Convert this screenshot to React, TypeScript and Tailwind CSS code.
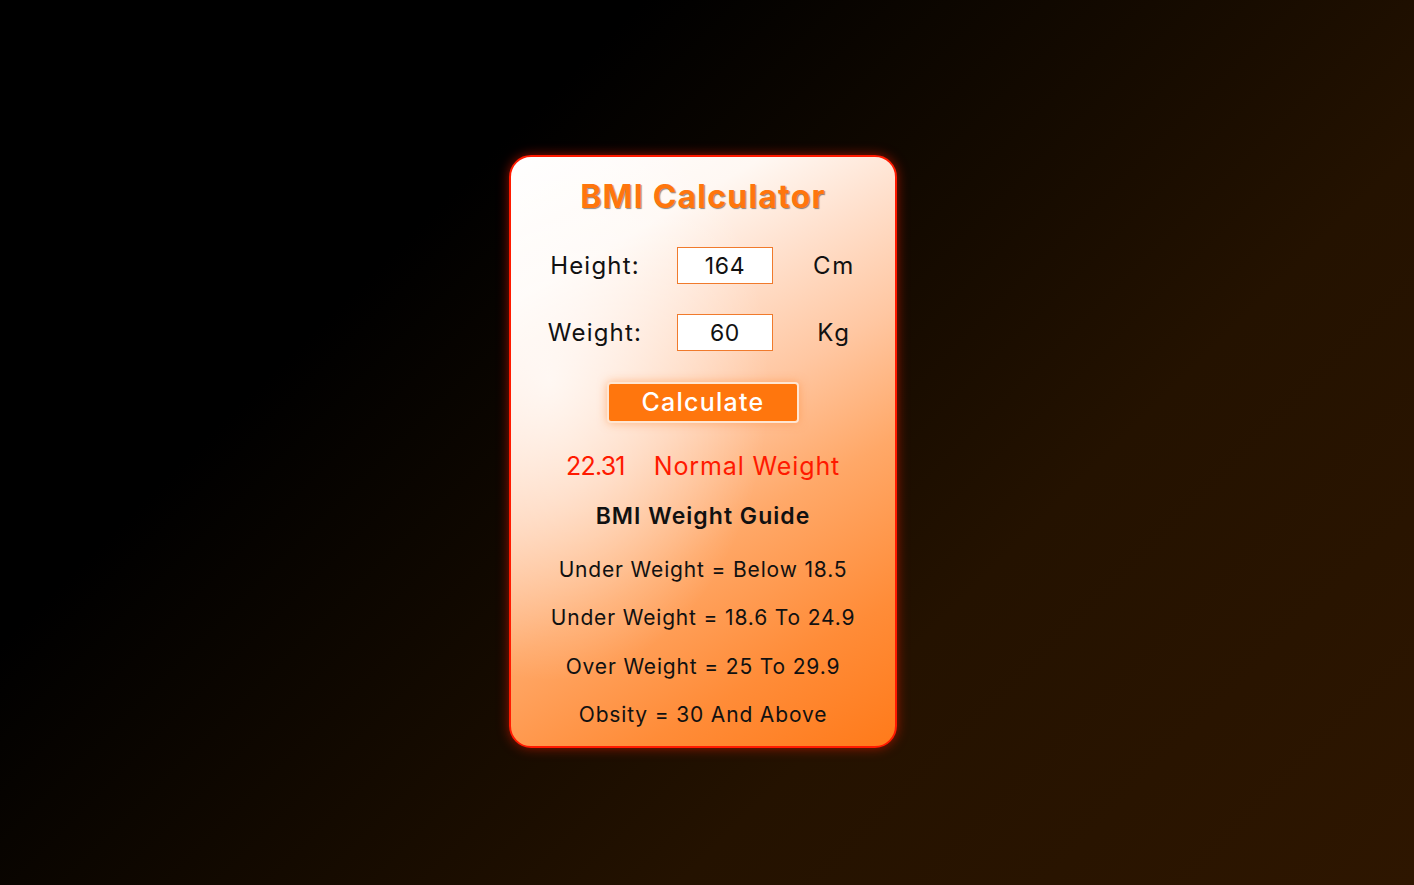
import { useState } from 'react';

const guide = [
  'Under Weight = Below 18.5',
  'Under Weight = 18.6 To 24.9',
  'Over Weight = 25 To 29.9',
  'Obsity = 30 And Above',
];

function Field({ label, value, unit, onChange }: { label: string; value: string; unit: string; onChange: (v: string) => void }) {
  return (
    <div className="flex h-[37px] w-full items-center pl-[32px]">
      <span className="w-[104px] text-center text-[24px] tracking-[0.05em] text-[#111]">{label}</span>
      <input
        value={value}
        onChange={(e) => onChange(e.target.value)}
        className="ml-[30px] h-[37px] w-[96px] border border-[#f07a2c] bg-white text-center text-[23px] tracking-[0.03em] text-[#111] outline-none"
      />
      <span className="ml-[16px] w-[90px] text-center text-[24px] tracking-[0.07em] text-[#111]">{unit}</span>
    </div>
  );
}

export default function App() {
  const [height, setHeight] = useState('164');
  const [weight, setWeight] = useState('60');

  return (
    <div className="flex min-h-screen items-center justify-center bg-[linear-gradient(135deg,#000_28%,#241200_68%,#2e1600_100%)] pr-[8px] pt-[18px] font-['Inter',sans-serif]">
      <div className="flex h-[593px] w-[388px] flex-col items-center rounded-[22px] border-2 border-[#ff1a00] bg-[radial-gradient(ellipse_220px_300px_at_10%_38%,rgba(255,255,255,0.75),rgba(255,255,255,0)),linear-gradient(150deg,#ffffff_0%,#fff8f3_18%,#ffe2d0_30%,#ffc7a2_46%,#ffa868_62%,#ff8c38_82%,#ff7a1a_100%)] pt-[20px] shadow-[0_0_12px_rgba(255,30,0,0.55)]">
        <h1 className="h-[40px] text-[32px] leading-[40px] font-bold tracking-[0.038em] text-[#ff760d] [text-shadow:1px_1px_1px_rgba(0,0,0,0.45)]">
          BMI Calculator
        </h1>

        <div className="mt-[30px] w-full">
          <Field label="Height:" value={height} unit="Cm" onChange={setHeight} />
        </div>
        <div className="mt-[30px] w-full">
          <Field label="Weight:" value={weight} unit="Kg" onChange={setWeight} />
        </div>

        <button className="mt-[31px] h-[41px] w-[192px] rounded-[4px] border-2 border-[#ffe6d2] bg-[#ff760d] text-[25px] font-medium tracking-[0.05em] text-white shadow-[0_0_10px_rgba(255,140,60,0.55)]">
          Calculate
        </button>

        <div className="mt-[27px] flex h-[32px] items-center gap-[29px] text-[25px] leading-[32px] text-[#ff1a00]">
          <span className="tracking-[-0.03em]">22.31</span>
          <span className="tracking-[0.035em]">Normal Weight</span>
        </div>

        <h2 className="mt-[19px] h-[30px] text-[23px] leading-[30px] font-semibold tracking-[0.045em] text-[#111]">BMI Weight Guide</h2>

        <div className="mt-[25px] flex flex-col items-center gap-[20.3px]">
          {guide.map((g) => (
            <p key={g} className="h-[28px] text-[21px] leading-[28px] tracking-[0.04em] text-[#111]">
              {g}
            </p>
          ))}
        </div>
      </div>
    </div>
  );
}
